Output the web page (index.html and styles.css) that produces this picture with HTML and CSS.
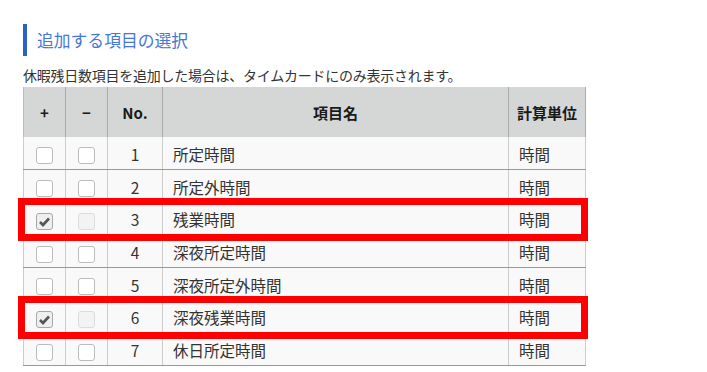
FILE: index.html
```html
<!DOCTYPE html>
<html lang="ja">
<head>
<meta charset="utf-8">
<link rel="stylesheet" href="styles.css">
</head>
<body>
<div class="page">
  <h2 class="section-title">追加する項目の選択</h2>
  <p class="note">休暇残日数項目を追加した場合は、タイムカードにのみ表示されます。</p>
  <div class="table-wrap">
    <table class="items">
      <colgroup>
        <col class="c-add"><col class="c-del"><col class="c-no"><col class="c-name"><col class="c-unit">
      </colgroup>
      <thead>
        <tr><th>+</th><th>−</th><th>No.</th><th>項目名</th><th>計算単位</th></tr>
      </thead>
      <tbody>
        <tr><td class="cb"><span class="box"></span></td><td class="cb"><span class="box"></span></td><td class="num">1</td><td class="txt">所定時間</td><td class="txt">時間</td></tr>
        <tr><td class="cb"><span class="box"></span></td><td class="cb"><span class="box"></span></td><td class="num">2</td><td class="txt">所定外時間</td><td class="txt">時間</td></tr>
        <tr><td class="cb"><span class="box checked"><svg viewBox="0 0 17 17" width="17" height="17"><path d="M4 9 L7 12 L13 5.5" fill="none" stroke="#555" stroke-width="2.6"/></svg></span></td><td class="cb"><span class="box disabled"></span></td><td class="num">3</td><td class="txt">残業時間</td><td class="txt">時間</td></tr>
        <tr><td class="cb"><span class="box"></span></td><td class="cb"><span class="box"></span></td><td class="num">4</td><td class="txt">深夜所定時間</td><td class="txt">時間</td></tr>
        <tr><td class="cb"><span class="box"></span></td><td class="cb"><span class="box"></span></td><td class="num">5</td><td class="txt">深夜所定外時間</td><td class="txt">時間</td></tr>
        <tr><td class="cb"><span class="box checked"><svg viewBox="0 0 17 17" width="17" height="17"><path d="M4 9 L7 12 L13 5.5" fill="none" stroke="#555" stroke-width="2.6"/></svg></span></td><td class="cb"><span class="box disabled"></span></td><td class="num">6</td><td class="txt">深夜残業時間</td><td class="txt">時間</td></tr>
        <tr><td class="cb"><span class="box"></span></td><td class="cb"><span class="box"></span></td><td class="num">7</td><td class="txt">休日所定時間</td><td class="txt">時間</td></tr>
      </tbody>
    </table>
    <div class="highlight hl-row3"></div>
    <div class="highlight hl-row6"></div>
  </div>
</div>
</body>
</html>
```
FILE: styles.css
```css
html, body {
  margin: 0;
  padding: 0;
  background: #fff;
}
body {
  font-family: "Noto Sans CJK JP", "Noto Sans", sans-serif;
  color: #333;
}
.page {
  padding: 24px 0 0 23px;
}
.section-title {
  margin: 0;
  height: 32px;
  border-left: 4.5px solid #2b5fcf;
  padding-left: 10px;
  font-size: 16.8px;
  font-weight: normal;
  line-height: 32px;
  color: #4777d6;
}
.note {
  margin: 7px 0 0 0;
  font-size: 14px;
  line-height: 24px;
  letter-spacing: -0.25px;
  color: #333;
}
.table-wrap {
  position: relative;
  width: 562px;
}
.items {
  border-collapse: collapse;
  table-layout: fixed;
  width: 562px;
}
.c-add { width: 42px; }
.c-del { width: 42px; }
.c-no { width: 55px; }
.c-name { width: 346px; }
.c-unit { width: 77px; }
.items th {
  height: 50px;
  padding: 0;
  background: #d5d7d7;
  border-left: 1px solid #aaa;
  border-right: 1px solid #aaa;
  font-size: 15px;
  font-weight: bold;
  color: #1a1a1a;
  text-align: center;
  vertical-align: middle;
}
.items th:first-child { border-left-color: #bbb; }
.items tbody tr {
  height: 32.7px;
}
.items td {
  padding: 1px 0 0 0;
  background: #f9f9f9;
  border-left: 1px solid #ccc;
  border-right: 1px solid #ccc;
  border-bottom: 1px solid #999;
  font-size: 15.5px;
  color: #333;
  vertical-align: middle;
  line-height: 20px;
}
.items td.cb {
  text-align: center;
}
.items td.num {
  text-align: center;
}
.items td.txt {
  padding-left: 10px;
}
.box {
  display: inline-block;
  width: 17px;
  height: 17px;
  box-sizing: border-box;
  border: 1px solid #bcbcbc;
  border-radius: 3px;
  background: #fff;
  vertical-align: middle;
  position: relative;
}
.box svg {
  position: absolute;
  left: -1px;
  top: -1px;
}
.box.checked {
  background: #efefef;
  border-color: #a8a8a8;
}
.box.disabled {
  background: #f3f3f3;
  border-color: #dcdcdc;
}
.highlight {
  position: absolute;
  left: -5.5px;
  width: 570.5px;
  height: 43px;
  box-sizing: border-box;
  border: 7px solid #ff0000;
  pointer-events: none;
}
.hl-row3 { top: 111px; }
.hl-row6 { top: 209px; }
```
